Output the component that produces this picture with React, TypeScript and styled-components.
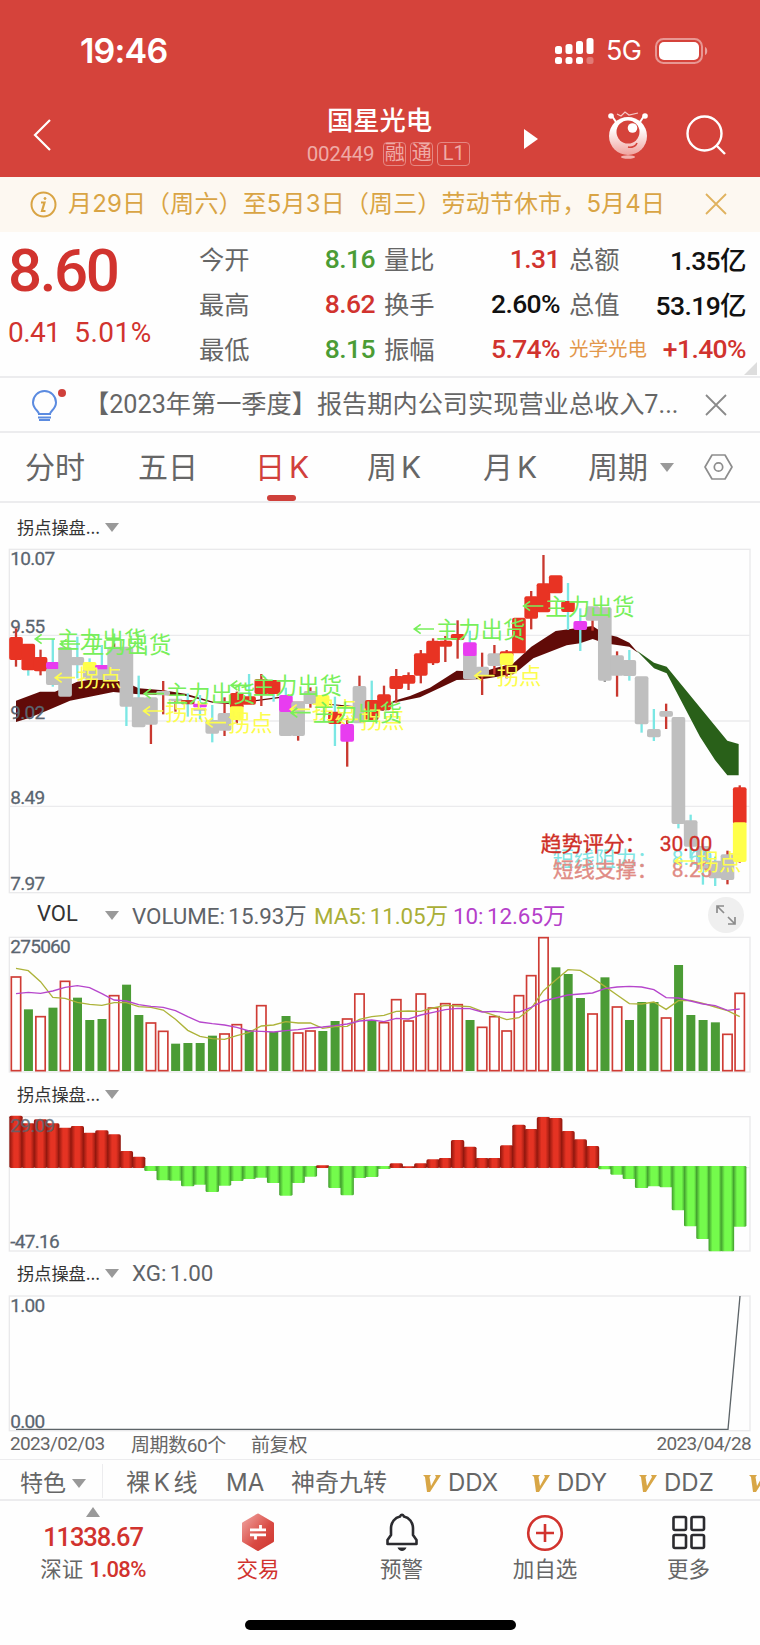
import React from "react";
import styled, { createGlobalStyle } from "styled-components";

const CJK = '"Noto Sans CJK SC", sans-serif';
const C = {
  brand: "#d5433b",
  red: "#d1332e",
  green: "#4b9c35",
  grey: "#666666",
  line: "#ececee",
  slate: "#5a6570",
  amber: "#d9a444",
};

const Global = createGlobalStyle`
  * { box-sizing: border-box; }
  body { margin: 0; background: #fefefe; }
`;

const Screen = styled.div`
  width: 760px;
  height: 1645px;
  overflow: hidden;
  display: flex;
  flex-direction: column;
  background: #fefefe;
  color: ${C.grey};
  font-family: Roboto, ${CJK};
  white-space: nowrap;
`;

/* ---------- header ---------- */
const Header = styled.header`
  flex: none;
  height: 177px;
  background: ${C.brand};
  color: #fff;
`;
const StatusBar = styled.div`
  height: 101px;
  padding: 0 52px 0 80px;
  display: flex;
  align-items: center;
  font-family: Inter, sans-serif;
`;
const Clock = styled.span`
  flex: 1;
  font-size: 34px;
  font-weight: 600;
  letter-spacing: -0.8px;
`;
const Network = styled.span`
  width: 61px;
  padding-left: 12px;
  font-size: 27px;
  letter-spacing: -0.6px;
`;
const NavBar = styled.div`
  height: 68px;
  display: grid;
  grid-template-columns: 33px 227px 239px 109px 78px 40px;
  align-items: center;
`;
const TitleBlock = styled.div`
  grid-column: 3;
  display: flex;
  flex-direction: column;
  align-items: center;
`;
const Title = styled.h1`
  margin: 0;
  height: 37px;
  font: 500 26.3px/33px ${CJK};
`;
const Code = styled.div`
  display: flex;
  align-items: center;
  gap: 4px;
  height: 30px;
  margin-left: 18px;
  color: #efaaa6;
  font-size: 20.5px;
  font-weight: 400;
`;
const CodeNumber = styled.span`
  margin-right: 5px;
  letter-spacing: -0.3px;
`;
const Badge = styled.span<{ $w: number }>`
  width: ${(p) => p.$w}px;
  height: 24px;
  border: 1.3px solid #e58883;
  border-radius: 4px;
  font-size: 20px;
  line-height: 21px;
  text-align: center;
`;

/* ---------- notices ---------- */
const Notice = styled.div`
  flex: none;
  height: 55px;
  padding: 0 33px 1px 30px;
  display: flex;
  align-items: center;
  background: #fdf8f1;
  color: ${C.amber};
`;
const NoticeText = styled.span`
  flex: 1;
  padding-left: 11px;
  font: 400 24px/50px Inter, ${CJK};
  letter-spacing: 0.15px;
`;
const News = styled.div`
  flex: none;
  height: 55px;
  padding: 0 33px 0 30px;
  display: flex;
  align-items: center;
  border-bottom: 2px solid ${C.line};
`;
const NewsText = styled.span`
  flex: 1;
  padding-left: 18px;
  font: 400 25.2px/52px Roboto, ${CJK};
`;

/* ---------- quote ---------- */
const Quote = styled.section`
  flex: none;
  position: relative;
  height: 146px;
  display: grid;
  grid-template-columns: 199px 176px 185px 186px;
  border-bottom: 2px solid ${C.line};
`;
const PriceBox = styled.div`
  padding: 2px 0 0 8px;
  color: ${C.red};
`;
const Price = styled.div`
  height: 73px;
  font-size: 60px;
  font-weight: 500;
  line-height: 73px;
  letter-spacing: -2.4px;
`;
const Change = styled.div`
  display: flex;
  gap: 14px;
  font-size: 28px;
  line-height: 52px;
  letter-spacing: -0.6px;
  & > :last-child {
    letter-spacing: 0.5px;
  }
`;
const Stats = styled.dl`
  margin: 0;
  padding: 4px 0 0;
  display: grid;
  grid-template-rows: repeat(3, 45px);
  & + & {
    padding-left: 9px;
  }
`;
const Stat = styled.div`
  display: flex;
  align-items: center;
  justify-content: space-between;
`;
const StatLabel = styled.dt<{ $sector?: boolean }>`
  padding-bottom: 2px;
  font-family: ${CJK};
  font-size: ${(p) => (p.$sector ? 19.5 : 25.3)}px;
  color: ${(p) => (p.$sector ? "#e2974a" : C.grey)};
`;
const StatValue = styled.dd<{ $c: string }>`
  margin: 0;
  font-size: 26.5px;
  font-weight: 500;
  letter-spacing: -0.6px;
  color: ${(p) => p.$c};
`;
const Corner = styled.i`
  position: absolute;
  right: 3px;
  bottom: 1px;
  border: solid transparent;
  border-width: 13px 0 0 13px;
  border-bottom: 13px solid #ddd;
  border-top: 0;
`;

/* ---------- period tabs ---------- */
const Tabs = styled.nav`
  flex: none;
  height: 70px;
  padding-left: 25px;
  display: grid;
  grid-template-columns: 113px 117px 112px 116px 105px 116px 30px;
  align-items: center;
  border-bottom: 2px solid ${C.line};
`;
const Tab = styled.div<{ $on?: boolean }>`
  position: relative;
  display: flex;
  align-items: center;
  gap: 4px;
  height: 68px;
  font: 400 30px/68px Inter, ${CJK};
  color: ${(p) => (p.$on ? "#d1403b" : C.grey)};
  &::after {
    content: "";
    display: ${(p) => (p.$on ? "block" : "none")};
    position: absolute;
    left: 12px;
    bottom: 0;
    width: 29px;
    height: 6px;
    border-radius: 3px;
    background: #cf403b;
  }
`;
const MoreTab = styled(Tab)`
  gap: 12px;
`;

/* ---------- charts ---------- */
const Caret = styled.i<{ $up?: boolean }>`
  width: 0;
  height: 0;
  border: 7px solid transparent;
  border-top: ${(p) => (p.$up ? "0" : "9px solid #999")};
  border-bottom: ${(p) => (p.$up ? "10px solid #999" : "0")};
`;
const PanelHead = styled.div<{ $h: number; $pad?: number }>`
  flex: none;
  height: ${(p) => p.$h}px;
  padding: ${(p) => p.$pad ?? 0}px 16px 0 17px;
  display: flex;
  align-items: center;
`;
const PanelName = styled.span`
  width: 88px;
  padding-bottom: 2px;
  font: 400 17.2px/24px ${CJK};
  color: #333;
`;
const VolName = styled(PanelName)`
  padding-left: 20px;
  font: 400 22px/24px Roboto, sans-serif;
`;
const Reading = styled.span<{ $c?: string; $w?: number }>`
  width: ${(p) => (p.$w ? p.$w + "px" : "auto")};
  padding-bottom: 2px;
  font-size: 22.4px;
  word-spacing: -2px;
  letter-spacing: -0.05px;
  color: ${(p) => p.$c ?? "#5f6368"};
`;
const HeadGap = styled.span`
  width: 13px;
`;
const Expand = styled.span`
  width: 36px;
  height: 36px;
  margin-left: auto;
  border-radius: 50%;
  background: #efefef;
  display: grid;
  place-items: center;
`;
const Plot = styled.svg`
  flex: none;
  display: block;
  width: 760px;
`;
const Axis = styled.div`
  flex: none;
  height: 28px;
  padding: 0 9px 4px 10px;
  display: flex;
  align-items: center;
  font-size: 19px;
  letter-spacing: -0.65px;
  border-bottom: 1px solid ${C.line};
  & > :nth-child(1) { width: 121px; }
  & > :nth-child(2) { width: 120px; letter-spacing: -0.4px; }
  & > :nth-child(3) { letter-spacing: -0.3px; }
  & > :nth-child(4) { margin-left: auto; }
`;

/* ---------- bottom ---------- */
const Tools = styled.div`
  flex: none;
  height: 41px;
  padding-top: 6px;
  display: grid;
  grid-template-columns: 103px 123px 65px 132px 109px 107px 110px 20px;
  align-items: center;
  border-bottom: 2px solid ${C.line};
  font: 400 24px/34px Inter, ${CJK};
`;
const Feature = styled.div`
  height: 34px;
  margin-top: -5px;
  padding: 5px 0 0 20px;
  display: flex;
  align-items: center;
  gap: 6px;
  font-size: 23px;
  border-right: 1px solid ${C.line};
`;
const Tool = styled.span<{ $pad?: number }>`
  display: flex;
  align-items: center;
  gap: 7px;
  padding-left: ${(p) => p.$pad ?? 0}px;
  word-spacing: -3px;
`;
const TabBar = styled.nav`
  flex: none;
  height: 119px;
  display: grid;
  grid-template-columns: 186px 144px 143px 144px 143px;
`;
const Item = styled.div<{ $on?: boolean }>`
  display: flex;
  flex-direction: column;
  align-items: center;
  padding-top: 11px;
  font: 400 21.5px/30px ${CJK};
  color: ${(p) => (p.$on ? C.red : C.grey)};
  svg { margin-bottom: 1px; }
`;
const IndexItem = styled(Item)`
  padding-top: 6px;
`;
const IndexValue = styled.span`
  height: 36px;
  font: 500 25.5px/40px Roboto, sans-serif;
  letter-spacing: -1.1px;
  color: ${C.red};
`;
const IndexChange = styled.b`
  font: 500 22px/30px Roboto, sans-serif;
  letter-spacing: -0.7px;
  margin-left: 6px;
  color: ${C.red};
`;
const HomeBar = styled.div`
  flex: none;
  width: 271px;
  height: 10px;
  margin-left: 245px;
  border-radius: 5px;
  background: #000;
`;

/* ---------- data (plot units are a third of a pixel) ---------- */
const cx = (i: number) => 48 + 36.8 * i;
const R = "#e83323", G = "#bfbfbf", M = "#e83cf0", Y = "#ffff4a", CY = "#7be7e4", WR = "#c9382f";

type Candle = { wick?: [number, number, string]; body: [number, number, string][] };
const k = (body: Candle["body"], wick?: Candle["wick"]): Candle => ({ body, wick });
const candles: Candle[] = [
  k([[381, 450, R]], [355, 470, WR]),
  k([[401, 481, R]], [450, 497, CY]),
  k([[441, 484, R]], [419, 496, WR]),
  k([[475, 525, G], [456, 477, M]], [387, 530, CY]),
  k([[411, 560, G]]),
  k([[441, 466, G]], [380, 505, CY]),
  k([[475, 508, G], [456, 482, Y]], [445, 510, CY]),
  k([[476, 510, G], [465, 478, M]], [405, 500, CY]),
  k([[410, 510, G]], [400, 430, WR]),
  k([[410, 590, G]], [580, 648, CY]),
  k([[562, 652, G]], [497, 600, CY]),
  k([[562, 644, G]], [630, 702, WR]),
  k([[543, 556, G]], [513, 613, WR]),
  k([[566, 574, G]], [570, 605, WR]),
  k([[570, 583, WR]], [550, 620, CY]),
  k([[596, 602, G], [581, 592, M]], [555, 628, CY]),
  k([[630, 671, G]], [585, 697, CY]),
  k([[609, 662, G]], [562, 678, WR]),
  k([[549, 595, R], [589, 630, Y]], [545, 640, WR]),
  k([[559, 584, R]], [492, 580, CY]),
  k([[507, 552, R]], [492, 588, WR]),
  k([[510, 552, R]], [520, 575, CY]),
  k([[600, 678, G], [555, 606, M]], [533, 600, CY]),
  k([[575, 678, G]], [640, 692, WR]),
  k([[543, 582, G]], [532, 593, WR]),
  k([[555, 590, Y]]),
  k([[605, 642, R]], [560, 708, CY]),
  k([[642, 695, M]], [625, 770, WR]),
  k([[528, 640, G]], [497, 600, WR]),
  k([[570, 630, R]], [512, 600, CY]),
  k([[553, 601, R]], [527, 600, WR]),
  k([[498, 537, R]], [477, 578, WR]),
  k([[495, 521, R]], [487, 540, WR]),
  k([[430, 497, R]], [420, 520, WR]),
  k([[392, 460, R]], [385, 465, WR]),
  k([[392, 410, R]], [378, 456, WR]),
  k([[372, 390, R]], [331, 446, WR]),
  k([[430, 508, G], [397, 438, M]], [362, 430, CY]),
  k([[470, 498, G]], [428, 555, WR]),
  k([[430, 468, G]], [405, 492, WR]),
  k([[424, 440, R], [430, 465, Y]], [420, 505, WR]),
  k([[323, 430, R]]),
  k([[259, 326, R]], [243, 358, WR]),
  k([[220, 307, R]], [135, 260, WR]),
  k([[196, 250, R]]),
  k([[273, 306, R]], [219, 360, CY]),
  k([[333, 360, M]], [295, 423, CY]),
  k([[289, 332, G]], [320, 362, WR]),
  k([[292, 512, G]], [500, 516, "#999"]),
  k([[436, 497, G]], [424, 560, WR]),
  k([[450, 498, G]], [420, 512, CY]),
  k([[499, 643, G]], [600, 668, CY]),
  k([[657, 682, G]], [597, 693, CY]),
  k([[603, 620, G]], [581, 657, WR]),
  k([[621, 942, G]], [900, 955, CY]),
  k([[931, 1010, G]], [914, 1045, CY]),
  k([[1008, 1078, G]], [1000, 1124, CY]),
  k([[1052, 1105, G]], [1040, 1128, CY]),
  k([[1033, 1110, G]], [1022, 1123, WR]),
  k([[832, 942, R], [937, 1056, Y]], [826, 1058, WR]),
];
const sells = [[103, 387], [178, 402], [430, 551], [690, 526], [870, 608], [1240, 357], [1568, 288]];
const turns = [[163, 503], [428, 603], [616, 638], [868, 598], [1012, 628], [1422, 497]];

const redVol = new Set([0, 2, 4, 8, 11, 12, 17, 18, 20, 23, 24, 27, 28, 30, 31, 32, 33, 34, 35, 36, 38, 39, 40, 41, 42, 43, 47, 49, 53, 58, 59]);
const volume = [260, 358, 379, 353, 273, 323, 390, 387, 316, 284, 375, 398, 423, 461, 459, 459, 437, 431, 403, 420, 346, 426, 378, 428, 422, 423, 393, 386, 311, 393, 397, 328, 392, 311, 353, 340, 343, 390, 411, 379, 422, 316, 256, 142, 232, 252, 324, 371, 262, 350, 390, 336, 336, 383, 225, 375, 390, 397, 432, 309];
const ma5 = [235, 242, 275, 322, 325, 337, 343, 346, 338, 338, 350, 352, 360, 388, 421, 439, 446, 448, 437, 427, 408, 405, 395, 399, 399, 415, 410, 409, 388, 380, 376, 364, 363, 364, 354, 346, 348, 350, 364, 376, 389, 383, 355, 302, 270, 239, 241, 264, 289, 315, 341, 342, 336, 358, 332, 331, 340, 351, 362, 380];
const ma10 = [311, 307, 310, 303, 292, 287, 293, 311, 330, 333, 344, 349, 352, 362, 380, 396, 401, 405, 412, 423, 424, 426, 422, 419, 414, 411, 407, 402, 393, 390, 395, 385, 387, 375, 367, 359, 355, 356, 366, 364, 367, 366, 352, 333, 324, 315, 312, 309, 296, 291, 289, 291, 299, 323, 324, 333, 342, 347, 361, 357];
const momentum = [107, 130, 118, 130, 143, 138, 158, 151, 163, 213, 230, 272, 300, 301, 318, 313, 335, 316, 302, 296, 292, 308, 346, 308, 289, 256, 323, 345, 293, 290, 266, 250, 259, 250, 238, 234, 180, 200, 234, 234, 196, 134, 147, 111, 114, 153, 178, 198, 267, 283, 296, 323, 318, 321, 390, 438, 476, 513, 513, 439];

const path = (ys: number[]) => ys.map((y, i) => `${cx(i)},${y}`).join(" ");

const Frame = ({ top, bottom }: { top: number; bottom: number }) => (
  <rect x="28" y={top} width="2222" height={bottom - top} fill="none" stroke="#e9e9eb" strokeWidth="4" />
);
const ScaleText = ({ y, children, x = 31 }: { y: number; children: string; x?: number }) => (
  <text x={x} y={y} fontSize="57" letterSpacing="-2.2" fill={C.slate} stroke={C.slate} strokeWidth="0.8" fontFamily="Roboto, sans-serif">{children}</text>
);
const Mark = ({ x, y, label, color }: { x: number; y: number; label: string; color: string }) => (
  <g>
    <path d={`M${x + 62} ${y}H${x + 3}M${x + 22} ${y - 14}L${x + 3} ${y}L${x + 22} ${y + 14}`} fill="none" stroke={color} strokeWidth="5" />
    <text x={x + 68} y={y + 26} fontSize="67" fill={color} fontFamily={CJK}>{label}</text>
  </g>
);

const CandlePlot = () => (
  <Plot viewBox="0 108 2280 1044" height="348">
    <Frame top={118} bottom={1148} />
    {[376, 633, 889].map((y) => <path key={y} d={`M28 ${y}H2250`} stroke="#ebebed" strokeWidth="4" />)}
    <path fill="#610b08" d="M48 572L120 545L165 545L232 515L300 505L345 510L400 527L416 535L490 541L560 552L640 575L700 580L760 571L840 560L870 575L930 575L1000 583L1060 588L1150 598L1180 573L1230 558L1290 533L1370 482L1450 485L1483 475L1540 460L1594 410L1667 363L1778 348L1814 372L1851 380L1888 398L1914 428L1888 410L1814 400L1778 387L1740 400L1700 406L1600 445L1560 478L1540 493L1483 502L1450 507L1370 510L1260 562L1180 578L1150 602L1060 592L1000 586L930 578L870 579L840 564L760 575L700 583L640 579L560 558L490 555L416 553L340 546L210 572L140 602L85 625L48 636Z" />
    <path fill="#296019" d="M1908 420L1962 458L2000 470L2182 692L2216 702V796H2182L2145 750L2100 680L2000 490L1962 475Z" />
    <ScaleText y={166}>10.07</ScaleText>
    <ScaleText y={370}>9.55</ScaleText>
    <ScaleText y={627}>9.02</ScaleText>
    <ScaleText y={883}>8.49</ScaleText>
    <ScaleText y={1141}>7.97</ScaleText>
    {candles.map((c, i) => (
      <g key={i}>
        {c.wick && <path d={`M${cx(i)} ${c.wick[0]}V${c.wick[1]}`} stroke={c.wick[2]} strokeWidth="7" />}
        {c.body.map(([a, b, f]) => (
          <rect key={f} x={cx(i) - 20.5} y={a} width="41" height={b - a} rx={Math.min(6, (b - a) / 3)} fill={f} />
        ))}
      </g>
    ))}
    {turns.map(([x, y]) => <Mark key={x} x={x} y={y} label="拐点" color="#fdfd4e" />)}
    {sells.map(([x, y]) => <Mark key={x} x={x} y={y} label="主力出货" color="#78ef5b" />)}
    <g fontFamily={`Roboto, ${CJK}`} fontSize="63">
      <g fill="#80e5e3">
        <text x="1658" y="1068">短线阻力：</text>
        <text x="2015" y="1065">8.69</text>
      </g>
      <g fill="#e08b84" stroke="#e08b84">
        <text x="1658" y="1101">短线支撑：</text>
        <text x="2015" y="1101">8.23</text>
      </g>
      <g fill="#cf2f27" stroke="#cf2f27">
        <text x="1622" y="1024">趋势评分：</text>
        <text x="1979" y="1024">30.00</text>
      </g>
    </g>
    <Mark x={2022} y={1053} label="拐点" color="#fdfd4e" />
  </Plot>
);

const VolumePlot = () => (
  <Plot viewBox="0 138 2280 414" height="138">
    <Frame top={142} bottom={546} />
    {volume.map((y, i) =>
      redVol.has(i) ? (
        <rect key={i} x={cx(i) - 14} y={y + 1} width="28" height={541 - y} fill="#fff" stroke="#cf3c35" strokeWidth="5" />
      ) : (
        <rect key={i} x={cx(i) - 13} y={y} width="27" height={543 - y} fill={C.green} />
      )
    )}
    <polyline points={path(ma5)} fill="none" stroke="#adb33a" strokeWidth="4" />
    <polyline points={path(ma10)} fill="none" stroke="#b646cc" strokeWidth="4" />
    <ScaleText y={190}>275060</ScaleText>
  </Plot>
);

const MomentumPlot = () => (
  <Plot viewBox="0 105 2280 414" height="138">
    <defs>
      <linearGradient id="up">
        <stop offset="0" stopColor="#8d150c" />
        <stop offset=".35" stopColor="#e53323" />
        <stop offset=".65" stopColor="#e53323" />
        <stop offset="1" stopColor="#8d150c" />
      </linearGradient>
      <linearGradient id="down">
        <stop offset="0" stopColor="#3f9a2c" />
        <stop offset=".3" stopColor="#74fb4c" />
        <stop offset=".75" stopColor="#74fb4c" />
        <stop offset="1" stopColor="#3f9a2c" />
      </linearGradient>
    </defs>
    <Frame top={110} bottom={513} />
    <path d="M28 263H2250" stroke="#ebebed" strokeWidth="3" />
    {momentum.map((v, i) =>
      v < 264 && i !== 30 ? (
        <rect key={i} x={cx(i) - 20} y={v} width="40" height={264 - v} rx="5" fill="url(#up)" />
      ) : (
        <rect key={i} x={cx(i) - 20} y="258" width="40" height={v - 257} rx="4" fill="url(#down)" />
      )
    )}
    <g opacity=".85"><ScaleText y={156}>29.09</ScaleText></g>
    <ScaleText y={505}>-47.16</ScaleText>
  </Plot>
);

const SignalPlot = () => (
  <Plot viewBox="0 102 2280 414" height="138">
    <Frame top={108} bottom={512} />
    <path d="M48 508H2184L2220 108" fill="none" stroke="#5d6468" strokeWidth="4" />
    <ScaleText y={155}>1.00</ScaleText>
    <ScaleText y={503}>0.00</ScaleText>
  </Plot>
);

const Close = ({ color }: { color: string }) => (
  <svg width="22" height="22" viewBox="0 0 22 22"><path d="M1 1L21 21M21 1L1 21" stroke={color} strokeWidth="1.8" /></svg>
);

const stats: { label: string; value: string; color: string; sector?: boolean }[][] = [
  [
    { label: "今开", value: "8.16", color: C.green },
    { label: "最高", value: "8.62", color: C.red },
    { label: "最低", value: "8.15", color: C.green },
  ],
  [
    { label: "量比", value: "1.31", color: C.red },
    { label: "换手", value: "2.60%", color: "#111" },
    { label: "振幅", value: "5.74%", color: C.red },
  ],
  [
    { label: "总额", value: "1.35亿", color: "#111" },
    { label: "总值", value: "53.19亿", color: "#111" },
    { label: "光学光电", value: "+1.40%", color: C.red, sector: true },
  ],
];

const Vip = () => (
  <svg width="18" height="17" viewBox="0 0 18 17">
    <path d="M0 0H8L6.5 2L8 11L13 2L12 0H18L7 17H4L2 2Z" fill="#d8a646" />
  </svg>
);

export default function App() {
  return (
    <Screen>
      <Global />
      <Header>
        <StatusBar>
          <Clock>19:46</Clock>
          <svg width="39" height="28" viewBox="0 0 39 28" fill="#fff">
            <rect x="0" y="9" width="7" height="8" rx="2.5" />
            <rect x="10.5" y="7" width="7" height="10" rx="2.5" />
            <rect x="21" y="4" width="7" height="13" rx="2.5" />
            <rect x="31.5" y="1" width="7" height="16" rx="2.5" />
            <rect x="0" y="20" width="7" height="7" rx="2.5" />
            <rect x="10.5" y="20" width="7" height="7" rx="2.5" />
            <rect x="21" y="20" width="7" height="7" rx="2.5" />
            <rect x="31.5" y="20" width="7" height="7" rx="2.5" opacity=".3" />
          </svg>
          <Network>5G</Network>
          <svg width="53" height="26" viewBox="0 0 53 26">
            <rect x="1" y="1" width="46" height="24" rx="7.5" fill="none" stroke="#fff" strokeOpacity=".45" strokeWidth="2" />
            <rect x="4" y="4" width="40" height="18" rx="5" fill="#fff" />
            <path d="M50 9C53 10 53 16 50 17Z" fill="#fff" opacity=".5" />
          </svg>
        </StatusBar>
        <NavBar>
          <span />
          <svg width="18" height="32" viewBox="0 0 18 32"><path d="M17 1L2 16L17 31" fill="none" stroke="#fff" strokeWidth="2.2" /></svg>
          <TitleBlock>
            <Title>国星光电</Title>
            <Code>
              <CodeNumber>002449</CodeNumber>
              <Badge $w={23}>融</Badge>
              <Badge $w={23}>通</Badge>
              <Badge $w={33}>L1</Badge>
            </Code>
          </TitleBlock>
          <svg width="40" height="28" viewBox="0 0 40 28"><path d="M25 8L39 18L25 28Z" fill="#fff" /></svg>
          <svg width="40" height="48" viewBox="0 0 40 48">
            <defs>
              <linearGradient id="bot" x1="0" y1="0" x2="0" y2="1">
                <stop offset=".3" stopColor="#fff" />
                <stop offset="1" stopColor="#f0a39e" />
              </linearGradient>
            </defs>
            <path d="M4 5L8 11M36 5L32 11" stroke="#fff" strokeWidth="2" />
            <circle cx="3" cy="5" r="2.8" fill="#fff" />
            <circle cx="37" cy="5" r="2.8" fill="#fff" />
            <path d="M9 3L13 5L17 1L21 4L30 2" fill="none" stroke="#f6c9c6" strokeWidth="1.2" />
            <circle cx="20" cy="25" r="19" fill="url(#bot)" />
            <circle cx="20" cy="21" r="11.5" fill="#d5433b" />
            <circle cx="24.5" cy="17" r="4.8" fill="#fff" />
            <path d="M20 36C24 37 28 35 29 32" fill="none" stroke="#d5433b" strokeWidth="1.6" />
            <ellipse cx="20" cy="46" rx="7" ry="1.7" fill="#f3b1ad" />
          </svg>
          <svg width="40" height="40" viewBox="0 0 40 40" fill="none" stroke="#fff" strokeWidth="2.4">
            <circle cx="18.5" cy="18.5" r="17" /><path d="M30 30L39 39" />
          </svg>
        </NavBar>
      </Header>

      <Notice>
        <svg width="27" height="27" viewBox="0 0 27 27" fill="none" stroke={C.amber} strokeWidth="2">
          <circle cx="13.5" cy="13.5" r="12" />
          <path d="M11 11.5H14.5L12 20H15.5" strokeWidth="2.2" /><circle cx="15" cy="7.5" r="1" fill={C.amber} strokeWidth="1" />
        </svg>
        <NoticeText>月29日（周六）至5月3日（周三）劳动节休市，5月4日</NoticeText>
        <Close color="#e0b25e" />
      </Notice>

      <Quote>
        <PriceBox>
          <Price>8.60</Price>
          <Change><span>0.41</span><span>5.01%</span></Change>
        </PriceBox>
        {stats.map((col, i) => (
          <Stats key={i}>
            {col.map((s) => (
              <Stat key={s.label}>
                <StatLabel $sector={s.sector}>{s.label}</StatLabel>
                <StatValue $c={s.color}>{s.value}</StatValue>
              </Stat>
            ))}
          </Stats>
        ))}
        <Corner />
      </Quote>

      <News>
        <svg width="36" height="36" viewBox="0 0 36 36" fill="none">
          <path d="M9 27C9 24 3 22 3 15.5A11.5 11.5 0 0 1 26 15.5C26 22 20 24 20 27Z" stroke="#5b8be0" strokeWidth="2" />
          <path d="M8 30.5H21M9 33H20" stroke="#5b8be0" strokeWidth="1.8" />
          <circle cx="32" cy="6" r="4" fill="#cf403b" />
        </svg>
        <NewsText>【2023年第一季度】报告期内公司实现营业总收入7...</NewsText>
        <Close color="#8a8a8a" />
      </News>

      <Tabs>
        <Tab>分时</Tab>
        <Tab>五日</Tab>
        <Tab $on><span>日</span><span>K</span></Tab>
        <Tab><span>周</span><span>K</span></Tab>
        <Tab><span>月</span><span>K</span></Tab>
        <MoreTab>周期<Caret /></MoreTab>
        <svg width="29" height="26" viewBox="0 0 29 26" fill="none" stroke="#8d8d8d" strokeWidth="1.7">
          <path d="M8 1H21L28 13L21 25H8L1 13Z" strokeLinejoin="round" /><circle cx="14.5" cy="13" r="4.2" />
        </svg>
      </Tabs>

      <PanelHead $h={43} $pad={6}><PanelName>拐点操盘...</PanelName><Caret /></PanelHead>
      <CandlePlot />

      <PanelHead $h={42}>
        <VolName>VOL</VolName><Caret /><HeadGap />
        <Reading $w={182}>VOLUME: 15.93万</Reading>
        <Reading $w={139} $c="#a9ae36">MA5: 11.05万</Reading>
        <Reading $c="#b53fca">10: 12.65万</Reading>
        <Expand>
          <svg width="20" height="20" viewBox="0 0 20 20" fill="none" stroke="#8c8c8c" strokeWidth="1.7">
            <path d="M1 8V1H8M1 1L8 8M19 12V19H12M19 19L12 12" />
          </svg>
        </Expand>
      </PanelHead>
      <VolumePlot />

      <PanelHead $h={41}><PanelName>拐点操盘...</PanelName><Caret /></PanelHead>
      <MomentumPlot />

      <PanelHead $h={41}><PanelName>拐点操盘...</PanelName><Caret /><HeadGap /><Reading>XG: 1.00</Reading></PanelHead>
      <SignalPlot />

      <Axis><span>2023/02/03</span><span>周期数60个</span><span>前复权</span><span>2023/04/28</span></Axis>

      <Tools>
        <Feature>特色<Caret /></Feature>
        <Tool $pad={23}>裸 K 线</Tool>
        <Tool>MA</Tool>
        <Tool>神奇九转</Tool>
        <Tool><Vip />DDX</Tool>
        <Tool><Vip />DDY</Tool>
        <Tool><Vip />DDZ</Tool>
        <Tool><Vip /></Tool>
      </Tools>

      <TabBar>
        <IndexItem>
          <Caret $up />
          <IndexValue>11338.67</IndexValue>
          <span>深证<IndexChange>1.08%</IndexChange></span>
        </IndexItem>
        <Item $on>
          <svg width="36" height="40" viewBox="0 0 36 40">
            <defs>
              <linearGradient id="hex" x1="0" y1="0" x2="1" y2="1">
                <stop offset="0" stopColor="#efa39f" /><stop offset=".6" stopColor="#d94a43" /><stop offset="1" stopColor="#cf3831" />
              </linearGradient>
            </defs>
            <path d="M18 3L32.5 11.5V29L18 37.5L3.5 29V11.5Z" fill="url(#hex)" stroke="url(#hex)" strokeWidth="3" strokeLinejoin="round" />
            <path d="M10 17.8H26M20.500 13V17.8M26 22.800H10M15.500 22.800V27.500" fill="none" stroke="#fff" strokeWidth="2.800" />
          </svg>
          交易
        </Item>
        <Item>
          <svg width="36" height="40" viewBox="0 0 36 40" fill="none" stroke="#2b2b2f" strokeWidth="2.6">
            <path d="M7 16A11 12 0 0 1 16 4.500Q18 1 20 4.500A11 12 0 0 1 29 16V23L32.500 28V32H3.500V28L7 23Z" strokeLinejoin="round" />
            <path d="M13.500 35.500H22.500C21 40 15 40 13.500 35.500Z" fill="#2b2b2f" stroke="none" />
          </svg>
          预警
        </Item>
        <Item>
          <svg width="38" height="40" viewBox="0 0 38 40" fill="none" stroke={C.red} strokeWidth="2.6">
            <circle cx="19" cy="21" r="16.8" /><path d="M19 12V30M10 21H28" />
          </svg>
          加自选
        </Item>
        <Item>
          <svg width="36" height="40" viewBox="0 0 36 40" fill="none" stroke="#2b2b2f" strokeWidth="2.6">
            <rect x="2.5" y="5" width="12.5" height="13" rx="1.5" /><rect x="20.5" y="5" width="12.5" height="13" rx="1.5" />
            <rect x="2.5" y="23" width="12.5" height="13" rx="1.5" /><rect x="20.5" y="23" width="12.5" height="13" rx="1.5" />
          </svg>
          更多
        </Item>
      </TabBar>
      <HomeBar />
    </Screen>
  );
}
